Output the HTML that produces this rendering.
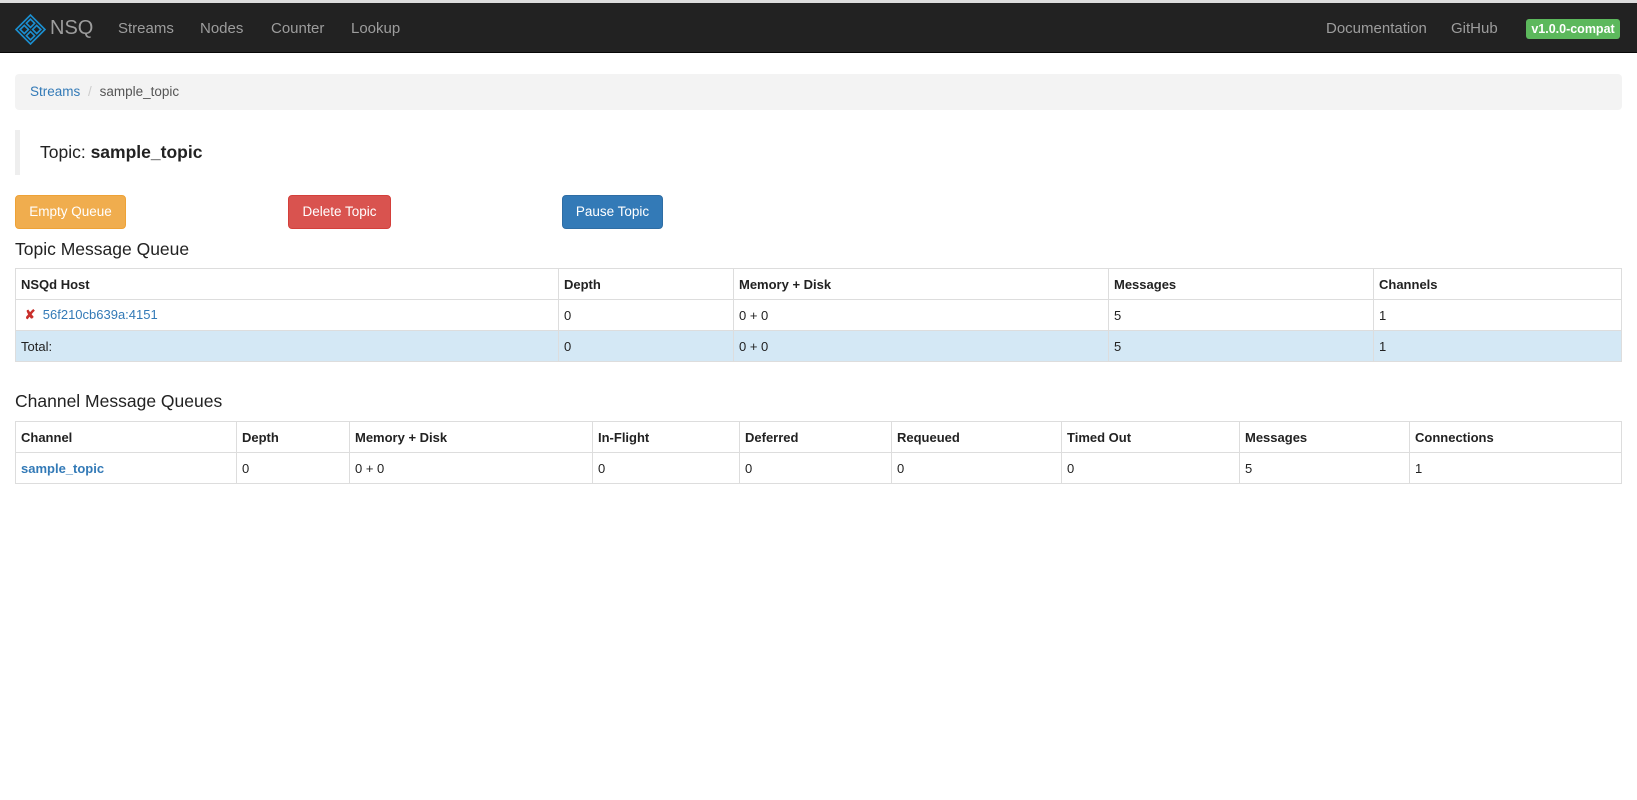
<!DOCTYPE html>
<html><head><meta charset="utf-8"><style>
*{box-sizing:border-box}
body{margin:0;width:1637px;height:800px;background:#fff;font-family:"Liberation Sans",Arial,sans-serif;color:#333;font-size:14px;position:relative;overflow:hidden}
.top{position:absolute;left:0;top:0;width:1637px;height:3px;background:#ddd}
.nav{position:absolute;left:0;top:3px;width:1637px;height:50px;background:#222;border-bottom:1px solid #080808}
.nav a{position:absolute;top:17px;color:#9d9d9d;font-size:15px;text-decoration:none}
.brand{position:absolute;left:50px;top:14px;color:#9d9d9d;font-size:20px}
.badge{position:absolute;left:1526px;top:16px;width:94px;height:20px;background:#5cb85c;border-radius:3px;color:#fff;font-weight:bold;font-size:12.5px;text-align:center;line-height:20px}
.bc{position:absolute;left:15px;top:74px;width:1607px;height:36px;background:#f3f3f3;border-radius:4px;padding:9px 15px;font-size:13.5px;line-height:18px}
.bc a{color:#337ab7;text-decoration:none}
.bq{position:absolute;left:15px;top:130px;height:45px;border-left:5px solid #eee;padding-left:20px;font-size:17.5px;line-height:45px;color:#222}
.btn{position:absolute;top:195px;height:34px;border-radius:4px;color:#fff;font-size:13.5px;text-align:center;line-height:32px;border:1px solid}
h3{position:absolute;left:15px;margin:0;font-size:17.5px;font-weight:normal;color:#222}
table{position:absolute;left:15px;width:1607px;border-collapse:collapse;table-layout:fixed}
td,th{border:1px solid #ddd;height:31px;padding:0 5px;text-align:left;font-size:13px;color:#222}
th{font-weight:bold}
a.l{color:#337ab7;text-decoration:none}
tr.info td{background:#d4e8f5}
</style></head><body>
<div class="top"></div>
<div class="nav">
<svg style="position:absolute;left:15px;top:11px" width="31" height="31" viewBox="0 0 30 30" fill="none" stroke="#1b8fd1" stroke-width="1.6">
<path d="M15 1L29 15L15 29L1 15Z"/>
<path d="M15 5L19 9L15 13L11 9Z"/><path d="M15 17L19 21L15 25L11 21Z"/>
<path d="M5 15L9 11L13 15L9 19Z"/><path d="M25 15L21 11L17 15L21 19Z"/>
</svg>
<span class="brand">NSQ</span>
<a style="left:118px">Streams</a><a style="left:200px">Nodes</a><a style="left:271px">Counter</a><a style="left:351px">Lookup</a>
<a style="left:1326px">Documentation</a><a style="left:1451px">GitHub</a>
<div class="badge">v1.0.0-compat</div>
</div>
<div class="bc"><a>Streams</a> <span style="color:#ccc;padding:0 4px">/</span> <span style="color:#555">sample_topic</span></div>
<div class="bq">Topic: <b>sample_topic</b></div>
<div class="btn" style="left:15px;width:111px;background:#f0ad4e;border-color:#eea236">Empty Queue</div>
<div class="btn" style="left:288px;width:103px;background:#d9534f;border-color:#d43f3a">Delete Topic</div>
<div class="btn" style="left:562px;width:101px;background:#337ab7;border-color:#2e6da4">Pause Topic</div>
<h3 style="top:239px">Topic Message Queue</h3>
<table style="top:268px">
<colgroup><col style="width:543px"><col style="width:175px"><col style="width:375px"><col style="width:265px"><col></colgroup>
<tr><th>NSQd Host</th><th>Depth</th><th>Memory + Disk</th><th>Messages</th><th>Channels</th></tr>
<tr><td>&nbsp;<span style="color:#c9302c;font-weight:bold">✘</span>&nbsp; <a class="l">56f210cb639a:4151</a></td><td>0</td><td>0 + 0</td><td>5</td><td>1</td></tr>
<tr class="info"><td>Total:</td><td>0</td><td>0 + 0</td><td>5</td><td>1</td></tr>
</table>
<h3 style="top:391px">Channel Message Queues</h3>
<table style="top:421px">
<colgroup><col style="width:221px"><col style="width:113px"><col style="width:243px"><col style="width:147px"><col style="width:152px"><col style="width:170px"><col style="width:178px"><col style="width:170px"><col></colgroup>
<tr><th>Channel</th><th>Depth</th><th>Memory + Disk</th><th>In-Flight</th><th>Deferred</th><th>Requeued</th><th>Timed Out</th><th>Messages</th><th>Connections</th></tr>
<tr><td><a class="l" style="font-weight:bold">sample_topic</a></td><td>0</td><td>0 + 0</td><td>0</td><td>0</td><td>0</td><td>0</td><td>5</td><td>1</td></tr>
</table>
</body></html>
